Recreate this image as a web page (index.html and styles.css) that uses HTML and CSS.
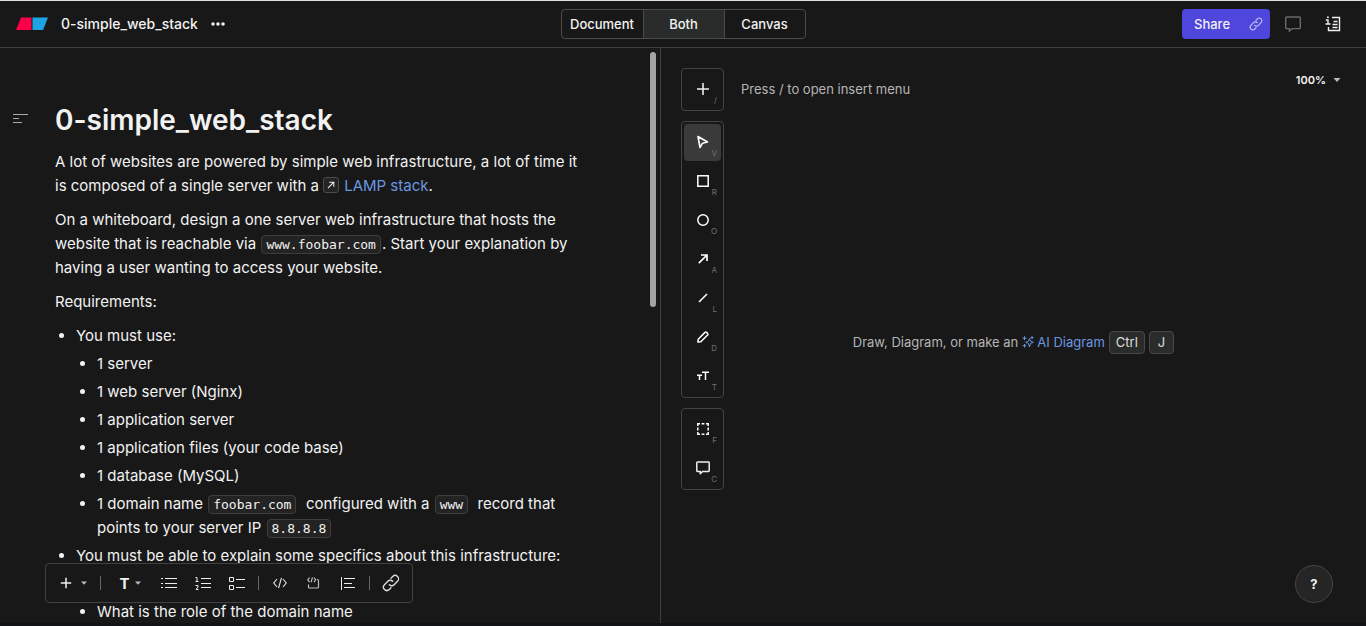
FILE: index.html
```html
<!DOCTYPE html>
<html lang="en">
<head>
<meta charset="utf-8">
<title>0-simple_web_stack</title>
<link rel="stylesheet" href="styles.css">
</head>
<body>
<header class="topbar">
  <div class="topbar-left">
    <svg class="logo" width="32" height="14" viewBox="0 0 32 14"><path d="M5 .5h10.500v12.500H0z" fill="#fc0049"/><path d="M16.500 .5H32l-5 12.500H16.500z" fill="#1ca5e2"/></svg>
    <span class="file-name">0-simple_web_stack</span>
    <button class="plain" aria-label="File menu"><svg width="14" height="4" viewBox="0 0 14 4" fill="#eee"><circle cx="2" cy="2" r="1.800"/><circle cx="7" cy="2" r="1.800"/><circle cx="12" cy="2" r="1.800"/></svg></button>
  </div>
  <nav class="tabs">
    <button class="tab">Document</button>
    <button class="tab tab-active">Both</button>
    <button class="tab">Canvas</button>
  </nav>
  <div class="topbar-right">
    <button class="share">Share
      <svg width="14" height="14" viewBox="0 0 16 16" fill="none" stroke="#c5c2f5" stroke-width="1.300" stroke-linecap="round"><path d="M6.500 9.500a3 3 0 0 0 4.300 0l3-3a3 3 0 0 0-4.300-4.300L8 3.700"/><path d="M9.500 6.500a3 3 0 0 0-4.300 0l-3 3a3 3 0 0 0 4.300 4.300L8 12.300"/></svg>
    </button>
    <button class="plain" aria-label="Comments"><svg width="16" height="16" viewBox="0 0 16 16" fill="none" stroke="#6a6a6a" stroke-width="1.400" stroke-linejoin="round"><path d="M1.500 1h13q.8 0 .8.800v10q0 .8-.8.800H7l-2.700 2.700v-2.700H1.500q-.8 0-.8-.8v-10q0-.8.8-.8z"/></svg></button>
    <button class="plain" aria-label="Information"><svg width="16" height="16" viewBox="0 0 16 16" fill="none" stroke="#eee" stroke-width="1.400"><path d="M7 1.500h7.500v13h-11v-3.500M8.500 5.500h4M7.500 8.500h5M7.500 11.500h5M.8 4h2.200v4M.5 8h5M2 1.200h1.800"/></svg></button>
  </div>
</header>
<main class="workspace">
  <section class="document">
    <button class="plain outline" aria-label="Outline"><svg width="16" height="10" viewBox="0 0 16 10" stroke="#aaa"><path d="M0 1.500h15M0 5.500h6M0 9.500h9"/></svg></button>
    <article class="content">
      <h1>0-simple_web_stack</h1>
      <p>A lot of websites are powered by simple web infrastructure, a lot of time it is composed of a single server with a <a href="#lamp"><svg class="link-badge" width="16" height="16" viewBox="0 0 16 16" fill="none" stroke="#eee" stroke-width="1.200"><path d="M4.500 11.500l6.700-6.700M6 4.800h5.200V10"/></svg>LAMP stack</a>.</p>
      <p>On a whiteboard, design a one server web infrastructure that hosts the website that is reachable via <code>www.foobar.com</code>. Start your explanation by having a user wanting to access your website.</p>
      <p>Requirements:</p>
      <ul>
        <li>You must use:
          <ul>
            <li>1 server</li>
            <li>1 web server (Nginx)</li>
            <li>1 application server</li>
            <li>1 application files (your code base)</li>
            <li>1 database (MySQL)</li>
            <li>1 domain name <code>foobar.com</code>&nbsp; configured with a <code>www</code>&nbsp; record that points to your server IP <code>8.8.8.8</code></li>
          </ul>
        </li>
        <li>You must be able to explain some specifics about this infrastructure:
          <ul>
            <li>What is a server</li>
            <li>What is the role of the domain name</li>
          </ul>
        </li>
      </ul>
    </article>
    <div class="scroll-thumb"></div>
    <div class="format-bar">
      <button class="format format-menu" aria-label="Insert"><svg width="12" height="12" viewBox="0 0 12 12" stroke="#eee" stroke-width="1.500"><path d="M6 .8v10.400M.8 6h10.400"/></svg><svg width="6" height="4" viewBox="0 0 6 4" fill="#bbb"><path d="M0 .5h6L3 3.800z"/></svg></button>
      <span class="divider"></span>
      <button class="format format-text" aria-label="Text style"><b>T</b><svg width="6" height="4" viewBox="0 0 6 4" fill="#bbb"><path d="M0 .5h6L3 3.800z"/></svg></button>
      <button class="format" aria-label="Bulleted list"><svg width="16" height="16" viewBox="0 0 16 16" stroke="#eee"><path d="M4 3.500h12M4 8.500h12M4 12.500h12M0 3.500h2M0 8.500h2M0 12.500h2"/></svg></button>
      <button class="format" aria-label="Numbered list"><svg width="16" height="16" viewBox="0 0 16 16" fill="none" stroke="#eee"><path d="M6 3.500h10M6 8.500h10M6 12.500h10M.5 2.500h1.500v4M.5 6.500h3M.5 10.500h2.500v1.500l-2 2.500h2.500"/></svg></button>
      <button class="format" aria-label="Task list"><svg width="16" height="16" viewBox="0 0 16 16" fill="none" stroke="#eee"><path d="M.5 2.500h4v4h-4zM.5 10.500h4v4h-4zM7 4.500h9M7 12.500h9"/></svg></button>
      <span class="divider"></span>
      <button class="format" aria-label="Inline code"><svg width="14" height="12" viewBox="0 0 14 12" fill="none" stroke="#ddd" stroke-width="1.200"><path d="M4 2L.8 6 4 10M10 2l3.200 4L10 10M8.500 .8l-3 10.400"/></svg></button>
      <button class="format" aria-label="Code block"><svg width="14" height="14" viewBox="0 0 14 14" fill="none" stroke="#bbb" stroke-width="1.200"><path d="M1.500 8.500v2.500q0 1 1 1h8q1 0 1-1V4.500q0-1-1-1H10M2.500 1.500L.8 3.800l1.700 2.300M7 1.500l1.700 2.300L7 6.100M5.500 1.500L4 6.200"/></svg></button>
      <button class="format" aria-label="Divider"><svg width="14" height="14" viewBox="0 0 14 14" stroke="#eee"><path d="M.5 1v13M3 2.500h11M3 7.500h8M3 11.500h11"/></svg></button>
      <span class="divider"></span>
      <button class="format" aria-label="Link"><svg width="18" height="18" viewBox="0 0 16 16" fill="none" stroke="#ddd" stroke-width="1.200" stroke-linecap="round"><path d="M6.500 9.500a3 3 0 0 0 4.300 0l3-3a3 3 0 0 0-4.300-4.300L8 3.700"/><path d="M9.500 6.500a3 3 0 0 0-4.300 0l-3 3a3 3 0 0 0 4.300 4.300L8 12.300"/></svg></button>
    </div>
  </section>
  <section class="canvas">
    <div class="rail">
      <div class="tool-group">
        <button class="tool" aria-label="Insert"><svg width="12" height="12" viewBox="0 0 12 12" stroke="#eee" stroke-width="1.600"><path d="M6 0v12M0 6h12"/></svg><kbd>/</kbd></button>
      </div>
      <div class="tool-group">
        <button class="tool tool-active" aria-label="Select"><svg width="12" height="14" viewBox="0 0 12 14" fill="none" stroke="#fff" stroke-width="1.600" stroke-linejoin="round"><path d="M1 1.500l9.500 5.500-5 1.200L3 12.500z"/></svg><kbd>V</kbd></button>
        <button class="tool" aria-label="Rectangle"><svg width="12" height="12" viewBox="0 0 12 12" fill="none" stroke="#fff" stroke-width="1.500"><path d="M.8 .8h10.400v10.400H.8z"/></svg><kbd>R</kbd></button>
        <button class="tool" aria-label="Ellipse"><svg width="12" height="12" viewBox="0 0 12 12" fill="none" stroke="#fff" stroke-width="1.500"><circle cx="6" cy="6" r="5.200"/></svg><kbd>O</kbd></button>
        <button class="tool" aria-label="Arrow"><svg width="10" height="10" viewBox="0 0 10 10" fill="none" stroke="#fff" stroke-width="1.700"><path d="M.8 9.200L8.500 1.500M3 1h6v6"/></svg><kbd>A</kbd></button>
        <button class="tool" aria-label="Line"><svg width="10" height="10" viewBox="0 0 10 10" stroke="#fff" stroke-width="1.600"><path d="M1 9l8-8"/></svg><kbd>L</kbd></button>
        <button class="tool" aria-label="Draw"><svg width="12" height="12" viewBox="0 0 12 12" fill="none" stroke="#fff" stroke-width="1.500" stroke-linejoin="round"><path d="M1.200 8.200L8 1.400q.8-.7 1.600 0l1 1q.7.800 0 1.600L3.800 10.800l-2.900.3z"/></svg><kbd>D</kbd></button>
        <button class="tool" aria-label="Text"><svg width="12" height="10" viewBox="0 0 12 10" fill="none" stroke="#fff" stroke-width="1.500"><path d="M5 1.300h7M8.500 1.300V9M0 4.300h5M2.500 4.300V9"/></svg><kbd>T</kbd></button>
      </div>
      <div class="tool-group">
        <button class="tool" aria-label="Figure"><svg width="12" height="12" viewBox="0 0 12 12" fill="none" stroke="#fff" stroke-width="1.500"><path d="M.8 3V.8H3M9 .8h2.200V3M11.200 9v2.200H9M3 11.200H.8V9M4.600 .8h2.800M4.600 11.200h2.800M.8 4.600v2.800M11.200 4.600v2.800"/></svg><kbd>F</kbd></button>
        <button class="tool" aria-label="Comment"><svg width="14" height="14" viewBox="0 0 14 14" fill="none" stroke="#eee" stroke-width="1.500" stroke-linejoin="round"><path d="M1.500 1h11q.7 0 .7.700v8.100q0 .7-.7.700H6.500l-2.200 2.300v-2.300H1.500q-.7 0-.7-.7V1.700q0-.7.7-.7z"/></svg><kbd>C</kbd></button>
      </div>
    </div>
    <p class="insert-hint">Press / to open insert menu</p>
    <button class="plain zoom">100% <svg width="8" height="4" viewBox="0 0 8 4" fill="#bbb"><path d="M.5 0h7L4 4z"/></svg></button>
    <div class="empty-state">
      <span>Draw, Diagram, or make an</span>
      <a href="#ai"><svg width="12" height="12" viewBox="0 0 12 12" fill="none" stroke="#6a97e0" stroke-linejoin="round"><path d="M7.500 2.500l1 2.700 2.800 1.100-2.800 1.100-1 3.600-1.100-3.600-2.700-1.100 2.700-1.100zM2.500 .2v4M.5 2.200h4M10 .2v3M8.500 1.700h3M2.500 8v3.500M.7 9.700h3.500"/></svg>AI Diagram</a>
      <kbd class="key">Ctrl</kbd><kbd class="key key-last">J</kbd>
    </div>
    <button class="help" aria-label="Help">?</button>
  </section>
</main>
<footer class="edge"></footer>
</body>
</html>
```
FILE: styles.css
```css
* { box-sizing: border-box; }
body {
  margin: 0;
  height: 100vh;
  display: flex;
  flex-direction: column;
  background: #181818;
  color: #f2f2f2;
  font-family: Inter, "Liberation Sans", sans-serif;
  overflow: hidden;
}
button { font: inherit; color: inherit; cursor: pointer; }
svg { display: block; flex: none; }
a { color: #6a97e0; text-decoration: none; }
.plain { display: flex; align-items: center; padding: 0; border: 0; background: none; }

.topbar {
  flex: none;
  display: grid;
  grid-template-columns: 1fr auto 1fr;
  align-items: center;
  height: 48px;
  padding: 0 25px 0 16px;
  border-top: 1px solid #dde3e0;
  border-bottom: 1px solid #3f3f3f;
}
.topbar-left { display: flex; align-items: center; gap: 13px; }
.file-name { font-size: 14px; font-weight: 500; line-height: 20px; }
.topbar-right { display: flex; align-items: center; justify-content: flex-end; gap: 24px; }
.tabs {
  display: grid;
  grid-template-columns: 81px 81px 81px;
  height: 30px;
  margin-right: -9px;
  border: 1px solid #4b4b4b;
  border-radius: 4px;
  overflow: hidden;
}
.tab { padding: 0; border: 0; border-left: 1px solid #4b4b4b; background: none; font-size: 13px; font-weight: 500; }
.tab:first-child { border-left: 0; }
.tab-active { background: #2a2c2b; }
.share {
  display: flex;
  align-items: center;
  justify-content: space-between;
  width: 88px;
  height: 30px;
  margin-right: -9px;
  padding: 0 7px 0 12px;
  border: 0;
  border-radius: 4px;
  background: #4f46dc;
  font-size: 13px;
  font-weight: 500;
}

.workspace { flex: 1; min-height: 0; display: grid; grid-template-columns: 661fr 705fr; }
.document {
  position: relative;
  display: flex;
  align-items: flex-start;
  min-height: 0;
  padding-left: 13px;
  border-right: 1px solid #3f3f3f;
  overflow: hidden;
}
.outline { width: 42px; margin-top: 65px; }
.content { flex: 1; margin: 54px 80px 0 0; font-size: 15px; line-height: 24px; }
.content h1 { margin: 0 0 12px; font-size: 28px; line-height: 36px; font-weight: 600; }
.content p { margin: 0 0 10px; }
.content ul { margin: 0; padding-left: 21px; list-style: disc; }
.content li { margin-bottom: 4px; }
.content li:last-child { margin-bottom: 0; }
.content li > ul { margin-top: 4px; }
.content code {
  margin: 0 1px;
  padding: 1px 4px;
  border: 1px solid #3d3d3d;
  border-radius: 4px;
  background: #232323;
  font-family: "DejaVu Sans Mono", monospace;
  font-size: 13px;
  line-height: 16px;
}
.link-badge {
  display: inline-block;
  margin-right: 5px;
  border: 1px solid #4c4c4c;
  border-radius: 3px;
  background: #242424;
  vertical-align: -2px;
}
.scroll-thumb { position: absolute; top: 4px; right: 4px; width: 6px; height: 255px; border-radius: 3px; background: #a3a3a3; }
.format-bar {
  position: absolute;
  left: 45px;
  bottom: 20px;
  display: flex;
  align-items: center;
  height: 40px;
  padding: 0 4px;
  border: 1px solid #414141;
  border-radius: 4px;
  background: #181818;
}
.format { display: flex; align-items: center; justify-content: center; width: 34px; height: 32px; padding: 0; border: 0; background: none; }
.format-menu { width: 46px; gap: 9px; }
.format-text { width: 47px; gap: 5px; padding-left: 3px; font-size: 15px; }
.divider { width: 1px; height: 14px; margin: 0 4px; background: #666; }

.canvas { position: relative; display: flex; align-items: flex-start; padding: 20px 25px 0 20px; }
.rail { display: flex; flex-direction: column; gap: 10px; }
.tool-group { display: flex; flex-direction: column; gap: 2px; padding: 2px; border: 1px solid #434343; border-radius: 4px; }
.tool {
  position: relative;
  display: flex;
  align-items: center;
  justify-content: center;
  width: 37px;
  height: 37px;
  padding: 0 0 1px;
  border: 0;
  border-radius: 4px;
  background: none;
}
.tool-active { background: #3a3a3a; }
.tool kbd { position: absolute; right: 4px; bottom: 3px; color: #707070; font: 8px/10px Inter, sans-serif; }
.insert-hint { flex: 1; margin: 11px 0 0 17px; color: #b5b5b5; font-size: 13px; line-height: 20px; }
.zoom { gap: 7px; margin-top: 4px; font-size: 11px; line-height: 16px; font-weight: 600; }
.empty-state {
  position: absolute;
  inset: 0;
  display: flex;
  align-items: center;
  justify-content: center;
  gap: 4px;
  padding-top: 13px;
  color: #b5b5b5;
  font-size: 13px;
  line-height: 16px;
  pointer-events: none;
}
.empty-state a { display: flex; align-items: center; gap: 3px; pointer-events: auto; }
.key { padding: 2px 6px; border: 1px solid #484848; border-radius: 4px; background: #2a2c2b; color: #dedede; font: 13px/17px Inter, sans-serif; }
.key-last { padding: 2px 8px; }
.help {
  position: absolute;
  right: 33px;
  bottom: 20px;
  width: 38px;
  height: 38px;
  padding: 0;
  border: 1px solid #454545;
  border-radius: 50%;
  background: #252525;
  font-size: 13px;
  font-weight: 700;
}
.edge { flex: none; height: 3px; background: #101213; }
```
